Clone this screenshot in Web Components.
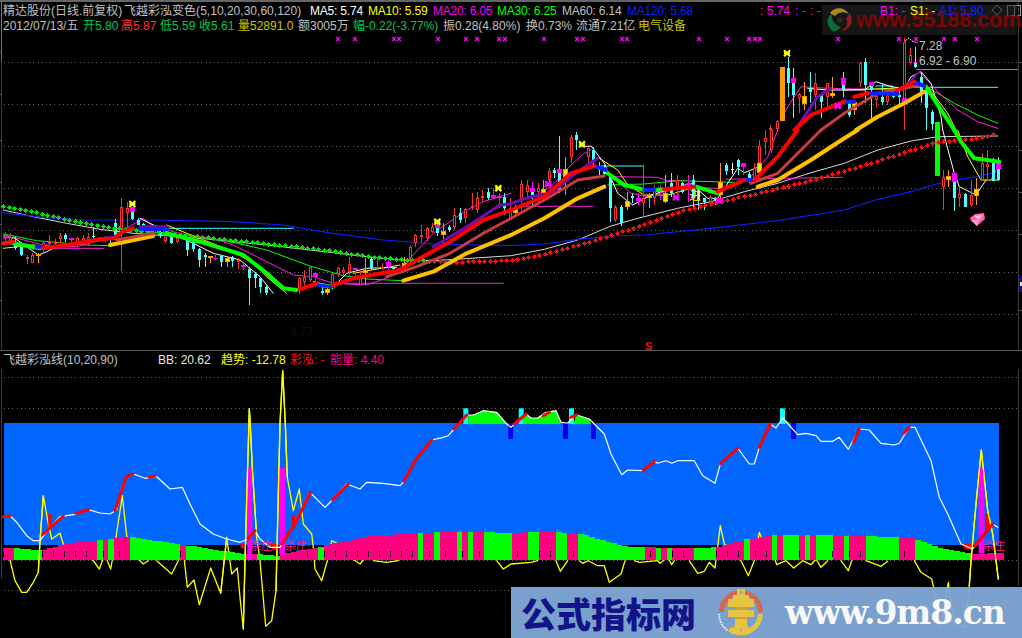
<!DOCTYPE html>
<html lang="zh"><head><meta charset="utf-8"><title>精达股份</title>
<style>
html,body{margin:0;padding:0;background:#000}
</style></head>
<body>
<stock-terminal>
  <main-chart>
    <quote-row slot="rows">
      <q-f w="121" c="#c0c0c0">精达股份(日线.前复权)</q-f>
      <q-f w="186" c="#c0c0c0" ls=".02">飞越彩泓变色(5,10,20,30,60,120)</q-f>
      <q-f w="58" c="#fff" ls="-.2">MA5: 5.74</q-f>
      <q-f w="65" c="#ff0" ls="-.2">MA10: 5.59</q-f>
      <q-f w="64" c="#f0f" ls="-.2">MA20: 6.05</q-f>
      <q-f w="65" c="#0f0" ls="-.2">MA30: 6.25</q-f>
      <q-f w="65" c="#c0c0c0" ls="-.2">MA60: 6.14</q-f>
      <q-f w="133" c="#0a20ff" ls="-.2">MA120: 5.68</q-f>
      <q-f w="35" c="#f0f">: 5.74</q-f>
      <q-f w="15" c="#f0f">: -</q-f>
      <q-f w="70" c="#f0f">: -</q-f>
      <q-f w="30" c="#f0f">B1: -</q-f>
      <q-f w="29" c="#ff0">S1: -</q-f>
      <q-f w="60" c="#0a20ff">A1: 5.80</q-f>
    </quote-row>
    <quote-row slot="rows">
      <q-f w="80" c="#c0c0c0">2012/07/13/五</q-f>
      <q-f w="38" c="#00c850">开5.80</q-f>
      <q-f w="39" c="#ff3232">高5.87</q-f>
      <q-f w="39" c="#00c850">低5.59</q-f>
      <q-f w="39" c="#00c850">收5.61</q-f>
      <q-f w="60" c="#c8c800">量52891.0</q-f>
      <q-f w="55" c="#c0c0c0">额3005万</q-f>
      <q-f w="90" c="#00c850">幅-0.22(-3.77%)</q-f>
      <q-f w="83" c="#c0c0c0">振0.28(4.80%)</q-f>
      <q-f w="50" c="#c0c0c0">换0.73%</q-f>
      <q-f w="62" c="#c0c0c0">流通7.21亿</q-f>
      <q-f w="60" c="#c8c800">电气设备</q-f>
    </quote-row>
  </main-chart>
  <indicator-chart>
    <quote-row slot="rows">
      <q-f w="155" c="#c0c0c0">飞越彩泓线(10,20,90)</q-f>
      <q-f w="63" c="#e8e8e8">BB: 20.62</q-f>
      <q-f w="69" c="#ff0">趋势: -12.78</q-f>
      <q-f w="40" c="#ff1010">彩泓: -</q-f>
      <q-f w="70" c="#ff0080">能量: 4.40</q-f>
    </quote-row>
  </indicator-chart>
  <brand-55188></brand-55188>
  <brand-9m8></brand-9m8>
</stock-terminal>
<script>
const A=(x,y)=>[x/3,130+y/3],B=(x,y)=>[511+x/3,130+y/3],C=(x,y)=>[511+x/3,y/3],D=(x,y)=>[x/3,345+y/3],E=(x,y)=>[511+x/3,345+y/3];
const f=n=>(+n).toFixed(1);
const FONT='"Liberation Sans","Noto Sans CJK SC",sans-serif';
function path(sp,s){const a=s.trim().split(/[\s,]+/).map(Number);const o=[];for(let i=0;i+1<a.length;i+=2)o.push(sp(a[i],a[i+1]));return o}
function merge(...g){return g.flatMap(([sp,s])=>path(sp,s))}
function line(pts,c,w,extra=''){return `<polyline fill="none" stroke="${c}" stroke-width="${w}" stroke-linejoin="round" stroke-linecap="round" ${extra} points="${pts.map(p=>f(p[0])+','+f(p[1])).join(' ')}"/>`}
function interp(pts,x){if(x<=pts[0][0])return pts[0][1];for(let i=1;i<pts.length;i++){if(x<=pts[i][0]){const a=pts[i-1],b=pts[i];return a[1]+(b[1]-a[1])*(x-a[0])/((b[0]-a[0])||1)}}return pts[pts.length-1][1]}
function dotted(y,x1=4,x2=1018){return `<line x1="${x1}" x2="${x2}" y1="${y+.5}" y2="${y+.5}" stroke="#666" stroke-width="1" stroke-dasharray="1 3.2" shape-rendering="crispEdges"/>`}

class QF extends HTMLElement{
  connectedCallback(){
    if(this.shadowRoot)return;
    const s=this.attachShadow({mode:'open'});
    const w=this.getAttribute('w'),c=this.getAttribute('c'),ls=this.getAttribute('ls')||'0';
    s.innerHTML=`<style>:host{display:block;flex:0 0 ${w}px;width:${w}px;color:${c};white-space:nowrap;letter-spacing:${ls}px}</style><slot></slot>`;
  }
}
class QuoteRow extends HTMLElement{
  connectedCallback(){
    if(this.shadowRoot)return;
    this.attachShadow({mode:'open'}).innerHTML=`<style>:host{display:flex;height:15px;line-height:15px;font:12px/15px ${FONT}}</style><slot></slot>`;
  }
}
class StockTerminal extends HTMLElement{
  connectedCallback(){
    if(this.shadowRoot)return;
    this.attachShadow({mode:'open'}).innerHTML=`<style>:host{display:block;position:relative;width:1022px;height:638px;background:#000;overflow:hidden}</style><slot></slot>`;
  }
}

/* ---------- main price pane ---------- */
const CANDLES=[
[A,[[14,305,315,325,335,'m'],[30,310,320,340,345,'r'],[46,322,335,355,360,'c'],[64,335,352,375,378,'c'],[80,375,380,385,402,'r'],[97,370,375,398,400,'r'],[115,370,372,377,398,'y'],[130,335,340,352,370,'r'],[148,315,335,342,355,'r'],[164,328,335,340,350,'r'],[180,310,318,328,340,'r'],[196,308,315,328,335,'c'],[214,325,325,330,345,'m'],[230,320,325,335,352,'r'],[248,315,325,335,345,'r'],[264,310,320,330,345,'r'],[280,290,318,322,330,'c'],[298,320,322,330,335,'r'],[314,318,322,330,335,'r'],[330,320,322,328,338,'c'],[346,268,278,315,330,'c'],[364,205,232,300,422,'r'],[380,215,235,250,290,'r'],[397,232,245,268,270,'c'],[397,232,232,245,245,'m'],[415,265,270,285,285,'c'],[430,280,282,295,300,'c'],[446,290,295,305,310,'r'],[462,295,300,315,320,'r'],[480,300,305,315,325,'c'],[496,320,322,332,340,'r'],[514,320,322,338,342,'c'],[530,315,325,335,340,'r'],[562,325,330,360,378,'c'],[580,330,332,358,365,'c'],[598,355,358,390,412,'c'],[614,370,375,380,410,'c'],[630,378,378,382,400,'y'],[646,370,383,388,390,'m'],[664,375,378,395,410,'c'],[680,378,385,395,410,'y'],[697,378,380,392,410,'c'],[713,385,390,392,418,'r'],[730,400,405,412,420,'m'],[748,410,418,445,525,'c'],[764,425,433,445,475,'c'],[781,440,445,470,490,'c'],[797,465,470,490,495,'c'],[897,440,445,480,492,'r'],[913,420,440,455,480,'r'],[930,410,412,450,455,'r'],[946,425,428,442,470,'m'],[965,470,482,490,495,'c'],[980,470,478,490,495,'y'],[997,430,432,470,480,'r'],[1013,410,415,432,440,'r'],[1030,410,420,428,435,'r'],[1046,380,402,425,440,'r'],[1064,415,415,420,440,'m'],[1080,420,440,465,465,'r'],[1096,385,420,430,465,'y'],[1114,380,388,415,420,'c'],[1130,385,410,415,420,'m'],[1147,400,410,415,420,'r'],[1163,390,395,410,420,'m'],[1180,410,412,418,420,'c'],[1213,380,400,412,420,'y'],[1230,345,352,385,395,'r'],[1246,312,316,340,350,'r'],[1264,285,315,322,340,'r'],[1280,290,295,325,332,'r'],[1296,280,290,305,310,'r'],[1312,270,295,310,318,'c'],[1312,285,285,295,295,'m'],[1330,280,302,316,340,'y'],[1346,285,290,300,305,'c'],[1363,235,255,290,300,'r'],[1380,235,250,270,280,'c'],[1396,235,238,265,280,'r'],[1415,190,228,235,240,'r'],[1430,185,203,240,250,'r'],[1447,180,198,203,215,'r'],[1463,175,185,205,210,'c'],[1480,175,195,205,205,'m'],[1497,190,198,203,235,'m'],[1513,190,200,235,255,'c'],[1530,205,235,270,270,'r']]],
[B,[[13,225,238,248,262,'y'],[31,150,163,210,240,'r'],[47,150,165,185,200,'r'],[64,155,175,185,225,'m'],[64,185,185,200,225,'c'],[80,160,175,185,200,'r'],[97,150,178,188,190,'y'],[113,115,122,150,170,'r'],[130,115,120,130,145,'c'],[145,18,128,185,190,'c'],[145,118,118,128,128,'m'],[163,80,118,140,195,'y'],[181,15,20,80,100,'r'],[196,5,15,30,60,'c'],[230,50,55,80,110,'r'],[247,50,60,90,115,'c'],[264,95,110,120,135,'c'],[280,105,115,133,140,'c'],[296,130,138,235,275,'c'],[313,225,232,270,275,'r'],[330,225,230,278,288,'c'],[347,185,212,230,240,'y'],[364,190,198,205,220,'c'],[380,190,205,212,225,'m'],[397,105,205,220,262,'r'],[413,190,195,205,235,'y'],[430,165,175,205,225,'r'],[447,165,172,182,210,'m'],[463,135,190,215,220,'y'],[480,130,158,190,200,'c'],[497,135,150,175,195,'r'],[514,155,160,185,190,'c'],[530,135,160,175,215,'m'],[547,135,150,205,230,'c'],[562,175,180,210,240,'c'],[580,205,205,215,240,'c'],[596,195,200,215,230,'r'],[613,200,205,210,225,'c'],[628,100,155,195,215,'y'],[645,100,105,122,135,'c'],[663,100,118,120,132,'w'],[680,88,90,110,135,'c'],[697,100,100,110,135,'m'],[713,125,132,150,160,'c'],[730,100,115,145,150,'r'],[745,30,48,100,125,'r'],[745,100,100,130,130,'y'],[763,0,25,35,75,'r'],[779,0,0,60,70,'r'],[1296,120,140,170,240,'r'],[1312,120,138,150,170,'y'],[1330,155,155,205,242,'c'],[1330,125,130,155,155,'m'],[1345,170,192,205,230,'r'],[1362,190,192,230,232,'c'],[1379,150,195,225,232,'r'],[1396,145,178,197,225,'y'],[1412,70,100,150,150,'r'],[1429,60,102,110,150,'r'],[1446,85,100,152,152,'c'],[1462,80,118,150,152,'c'],[1462,100,100,118,118,'m']]],
[C,[[777,375,385,390,390,'r'],[797,360,362,388,390,'r'],[830,170,205,250,290,'c'],[847,205,250,285,355,'c'],[847,235,235,250,250,'m'],[863,280,283,293,340,'r'],[880,245,288,312,330,'y'],[897,215,265,275,310,'c'],[913,220,250,285,330,'r'],[930,280,285,305,355,'c'],[947,250,250,290,320,'r'],[964,230,280,288,295,'y'],[997,215,235,270,290,'c'],[997,235,235,255,255,'m'],[1013,300,300,345,350,'c'],[1030,300,305,330,345,'y'],[1046,185,188,250,260,'r'],[1063,175,185,255,310,'c'],[1079,245,258,270,360,'c'],[1079,245,245,258,258,'m'],[1096,285,288,300,320,'r'],[1112,250,290,305,315,'c'],[1129,280,285,305,315,'r'],[1146,270,285,290,295,'c'],[1163,260,285,290,315,'c'],[1180,115,125,300,390,'r'],[1180,295,295,310,310,'m'],[1196,145,165,190,195,'r'],[1213,140,190,200,205,'c'],[1213,185,185,190,190,'m'],[1230,215,230,275,310,'c'],[1246,270,270,325,390,'c'],[1262,330,335,372,390,'c']]]
];
function candles(){
  let o='';
  const wickCol={r:'#ff3232',c:'#54ffff',m:'#ff00ff',y:'#ff9a00',w:'#fff'};
  for(const [sp,list] of CANDLES){
    for(const [x,h,t,b,l,k] of list){
      const [px,py1]=sp(x,h),py2=sp(x,l)[1],pt=sp(x,t)[1],pb=sp(x,b)[1];
      const X=Math.round(px);
      if(py2>py1)o+=`<rect x="${X}" y="${f(py1)}" width="1" height="${f(py2-py1)}" fill="${wickCol[k]}"/>`;
      if(k==='r')o+=`<rect x="${X-.5}" y="${f(pt+.5)}" width="2" height="${f(Math.max(1,pb-pt-1))}" fill="#000" stroke="#ff3232" stroke-width="1"/>`;
      else if(k==='y')o+=`<rect x="${X-1.5}" y="${f(pt+.5)}" width="4" height="${f(Math.max(1,pb-pt-1))}" fill="#ffe000" stroke="#ff9a00" stroke-width="1"/>`;
      else if(k==='m')o+=`<rect x="${X-2}" y="${f(pt)}" width="5" height="${f(Math.max(1,pb-pt))}" fill="#ff00ff"/>`;
      else o+=`<rect x="${X-1}" y="${f(pt)}" width="3" height="${f(Math.max(1,pb-pt))}" fill="${wickCol[k]}"/>`;
    }
  }
  return o;
}
function star(x,y,c,r=3){return `<g stroke="${c}" stroke-width="2.2"><line x1="${x-r}" y1="${y-r}" x2="${x+r}" y2="${y+r}"/><line x1="${x+r}" y1="${y-r}" x2="${x-r}" y2="${y+r}"/><line x1="${x-r}" y1="${y}" x2="${x+r}" y2="${y}"/></g>`}
function mainSvg(){
  let s='';
  for(const y of [62,104,146,188,230,272,314])s+=dotted(y);
  for(const y of [52,94,140,182,224,266,300])s+=`<rect x="0" y="${y}" width="2" height="1" fill="#555"/><rect x="1019" y="${y+10}" width="3" height="1" fill="#555"/>`;
  s+=`<polygon points="997,5 1002,10 997,15 992,10" fill="none" stroke="#999"/><rect x="1007.5" y="5.5" width="13" height="10" fill="none" stroke="#999"/><line x1="1014.5" y1="5" x2="1014.5" y2="16" stroke="#999"/>`;
  const xs=[1014,1065,1182,1197,1314,1398,1431,1497,1514].map(v=>v/3).concat([98,197,215,332,348,565,648,714,731,747,980,1163,1216,1300,1332,1398].map(v=>511+v/3));
  for(const x of xs){const X=Math.round(x);s+=`<g stroke="#ff00ff" stroke-width="1.3"><line x1="${X-1.8}" y1="37" x2="${X+1.8}" y2="41"/><line x1="${X+1.8}" y1="37" x2="${X-1.8}" y2="41"/></g>`}
  const gray=merge([A,'10 240 100 260 200 280 300 298 400 310 600 325 800 345 1000 368 1100 380 1200 390 1300 392 1533 377'],[B,'100 358 200 330 300 288 380 265 500 235 600 215 700 185 800 160 900 128 1000 100 1100 60 1200 33 1280 20 1460 18']);
  s+=line(gray,'#d8d8d8',1);
  const blue=merge([A,'10 248 130 262 250 270 450 270 700 275 850 285 1000 310 1150 330 1300 342 1533 347'],[B,'100 342 200 328 300 318 400 315 600 295 800 272 1000 240 1100 208 1200 185 1300 155 1400 140 1460 125']);
  s+=line(blue,'#0a20ff',1.2);
  s+=line(path(A,'450 295 880 295'),'#40ffff',1);
  s+=line(path(B,'250 108 395 108'),'#40ffff',1);
  s+=line(path(C,'1095 258 1145 258 1145 270'),'#40ffff',1);
  s+=line(path(C,'1240 262 1460 262'),'#40ffff',1);
  s+=line(path(A,'130 355 312 355'),'#ff20e0',1);
  s+=line(path(A,'1000 460 1510 460'),'#ff20e0',1);
  s+=line(path(B,'40 229 245 229'),'#ff20e0',1);
  s+=line(path(B,'300 140 440 142 470 152 520 152'),'#ff20e0',1);
  s+=line(path(B,'645 148 995 142'),'#ff20e0',1);
  s+=line(merge([A,'10 312 50 320 110 332 200 340 260 345 330 347']),'#00ff00',1);
  s+=line(merge([A,'690 335 800 360 930 408 1030 437 1100 447 1210 452']),'#00ff00',1);
  s+=line(merge([B,'290 165 400 162 500 152 640 156 690 160']),'#00ff00',1);
  s+=line(merge([C,'1250 262 1330 310 1400 345 1460 370']),'#00ff00',1);
  const mag=merge([A,'10 325 40 322 130 345 230 350 340 320 370 300 430 265 460 290 560 315 640 325 700 345 770 380 830 410 880 435 940 440 1000 460 1100 465 1170 440 1230 385 1300 310 1400 240 1450 215 1533 190']);
  s+=line(mag,'#ff20e0',1);
  s+=line(merge([B,'60 205 120 170 180 105 220 70 240 60']),'#ff20e0',1);
  s+=line(merge([B,'300 135 360 190 410 200 480 180 540 170 610 175 650 175 720 140 770 80 800 0']),'#ff20e0',1);
  s+=line(merge([C,'810 360 830 320 870 260 950 265 1180 270 1225 215 1280 275 1340 330 1400 365 1460 385']),'#ff20e0',1);
  s+=line(merge([B,'1440 150 1460 110']),'#ff20e0',1);
  s+=line(merge([C,'1000 270 1140 265 1250 260 1310 340 1335 390']),'#ffff00',1);
  s+=line(merge([B,'1340 0 1370 80 1410 150 1462 150']),'#ffff00',1);
  s+=line(merge([A,'10 355 100 345 180 352']),'#ffff00',1);
  s+=line(merge([A,'500 285 560 310 700 365 770 405 800 440 860 490']),'#ffff00',1);
  s+=line(merge([A,'1060 430 1200 405']),'#ffff00',1);
  s+=line(merge([B,'265 85 320 120 350 165 400 195 470 195 490 190 555 170']),'#ffff00',1);
  s+=line(merge([A,'10 318 45 325 80 350 115 375 140 365 180 345']),'#fff',1);
  s+=line(merge([A,'420 265 500 305 580 340 640 370 720 390 780 440 820 490']),'#fff',1);
  s+=line(merge([A,'940 455 1000 470 1040 430 1100 415 1190 412']),'#fff',1);
  s+=line(merge([B,'213 50 240 48 280 100 320 190 365 225 420 195 470 180 540 160 590 205 620 205 680 115 700 128 745 110']),'#fff',1);
  s+=line(merge([C,'890 265 950 270 1060 270 1095 245 1140 260 1180 265 1200 230 1230 215 1260 250 1290 350 1295 390']),'#fff',1);
  s+=line(merge([B,'1295 0 1330 130 1345 170 1395 195 1425 150']),'#fff',1);
  s+=`<g shape-rendering="crispEdges">${candles()}`;
  s+=`<rect x="${Math.round(511+807/3)}" y="67" width="5" height="54" fill="#ff9a00"/>`;
  s+=`<rect x="${Math.round(511+1273/3)}" y="122" width="5" height="54" fill="#00ff00"/>`;
  s+=`</g>`;
  const dots=merge([A,'10 228 100 245 200 268 300 288 400 300 500 310 600 320 700 330 800 340 900 350 1000 362 1100 378 1200 388 1280 392 1350 396 1533 390'],[B,'100 372 200 345 300 316 400 282 500 245 600 220 700 198 800 175 900 150 1000 122 1100 92 1200 60 1280 35 1400 25 1460 8']);
  let dg='';
  for(let x=3;x<=998;x+=5.53){const y=interp(dots,x);dg+=`<circle cx="${Math.round(x)+.5}" cy="${Math.round(y)+.5}" r="2.1" fill="${x<430?'#00e000':'#f01010'}"/>`}
  s+=`<g shape-rendering="crispEdges">${dg}</g>`;
  const rb=(sp,str,c,w)=>line(path(sp,str),c,w);
  s+=rb(A,'330 345 460 318','#ffc000',4);
  s+=rb(A,'1210 452 1300 425 1400 370 1533 315','#ffc000',4);
  s+=rb(B,'0 315 100 265 200 205 280 170','#ffc000',4);
  s+=rb(B,'740 170 800 150 900 90 1000 25 1040 0','#ffc000',4);
  s+=rb(C,'1035 390 1100 350 1180 310 1240 275','#ffc000',4);
  s+=rb(A,'350 330 460 310','#c83c3c',3);
  s+=rb(A,'1160 440 1250 410 1350 370 1450 310 1533 265','#c83c3c',3);
  s+=rb(B,'0 265 100 210 200 150 280 138','#c83c3c',3);
  s+=rb(B,'720 160 800 130 930 0','#c83c3c',3);
  s+=rb(C,'930 390 1000 340 1100 280 1230 255','#c83c3c',3);
  s+=rb(A,'1300 350 1400 290 1500 225 1533 222','#6a10b0',3);
  s+=rb(B,'0 220 60 200 120 190 200 125 260 85','#6a10b0',3);
  s+=rb(C,'860 380 920 290 960 265','#6a10b0',3);
  s+=rb(C,'1170 270 1225 215','#6a10b0',2);
  s+=rb(A,'420 290 500 290','#6a10b0',3);
  s+=rb(A,'40 340 120 355','#00ff00',4);
  s+=rb(A,'500 310 600 335 730 375 800 430 850 475 890 480','#00ff00',4);
  s+=rb(A,'960 465 1000 470','#00ff00',4);
  s+=rb(B,'290 130 340 165 400 180','#00ff00',4);
  s+=rb(B,'430 180 450 180','#00ff00',4);
  s+=rb(B,'555 170 620 190','#00ff00',4);
  s+=rb(C,'1245 260 1290 330 1330 390','#00ff00',4);
  s+=rb(B,'1330 0 1350 35 1390 85 1465 95','#00ff00',4);
  s+=rb(A,'110 350 130 350','#0a20ff',4);
  s+=rb(A,'320 325 340 325','#0a20ff',4);
  s+=rb(A,'420 297 500 297','#0a20ff',4);
  s+=rb(A,'950 465 1000 470','#0a20ff',3);
  s+=rb(B,'250 108 285 120','#0a20ff',4);
  s+=rb(B,'400 180 430 180','#0a20ff',4);
  s+=rb(B,'700 150 730 150','#0a20ff',4);
  s+=rb(C,'1000 305 1030 305','#0a20ff',4);
  s+=rb(C,'1070 280 1160 282','#0a20ff',4);
  s+=rb(C,'1215 248 1240 258','#0a20ff',4);
  s+=rb(A,'10 340 40 335','#ff1010',4);
  s+=rb(A,'130 355 200 345 300 328 340 325 370 305 400 295','#ff0000',4);
  s+=rb(A,'900 478 950 460','#ff0000',4);
  s+=rb(A,'1000 465 1060 445 1200 420 1260 385 1350 335 1450 270 1533 240','#ff0000',4);
  s+=rb(B,'0 240 100 200 180 130 250 108','#ff0000',4);
  s+=rb(B,'460 178 550 170','#ff0000',4);
  s+=rb(B,'620 185 700 150','#ff0000',4);
  s+=rb(B,'730 150 800 80 860 0','#ff0000',4);
  s+=rb(C,'850 390 900 345 1000 305','#ff0000',4);
  s+=rb(C,'1030 290 1070 280','#ff0000',4);
  s+=rb(C,'1160 270 1210 245','#ff0000',4);
  for(const [x,y] of [A(397,222),A(1312,275),A(1495,175),B(213,43),C(828,160)])s+=star(f(x)*1,f(y)*1,'#ffff00');
  for(const [x,y] of [B(112,162),B(495,202),B(625,212),C(980,318)])s+=star(f(x)*1,f(y)*1,'#ff00ff');
  s+=`<polyline points="905,41 909,38 912,41 918,43" fill="none" stroke="#ddd" stroke-width="1" stroke-dasharray="2 1"/>`;
  s+=`<rect x="916" y="69" width="102" height="1" fill="#888"/>`;
  s+=`<text x="919" y="50" fill="#c0c0c0" font-family="Liberation Sans" font-size="12">7.28</text>`;
  s+=`<text x="919" y="65" fill="#c0c0c0" font-family="Liberation Sans" font-size="12">6.92 - 6.90</text>`;
  s+=`<g><polygon points="970,218 975,214 984,213 985,219 977,226 971,221" fill="#ff5fa8"/><polygon points="974,216 983,215 979,220" fill="#ffc0dc"/><polygon points="977,226 972,220 979,220" fill="#ffa0c8"/></g>`;
  s+=`<text x="645" y="350" fill="#f01010" font-family="Liberation Sans" font-size="11" font-weight="700">S</text>`;
  s+=`<text x="689" y="200" fill="#ffee00" font-family="Noto Sans CJK SC" font-size="12">进</text>`;
  s+=`<text x="290" y="336" fill="#0a120c" font-family="Liberation Sans" font-size="12">3.77</text>`;
  s+=`<rect x="1019" y="276" width="3" height="16" fill="#10107a"/><rect x="1020" y="282" width="2" height="4" fill="#ddd"/>`;
  return s;
}
class MainChart extends HTMLElement{
  connectedCallback(){
    if(this.shadowRoot)return;
    this.attachShadow({mode:'open'}).innerHTML=`<style>
      :host{display:flex;flex-direction:column;height:351px;box-sizing:border-box;border-top:2px solid #666;overflow:hidden}
      .head{padding:2px 0 0 3px;height:31px;box-sizing:border-box;flex:none;position:relative;z-index:1}
      svg{display:block;flex:none;width:1022px;height:349px;margin-top:-31px}
    </style>
    <div class="head"><slot name="rows"></slot></div>
    <svg viewBox="0 2 1022 349" xmlns="http://www.w3.org/2000/svg" id="s"></svg>`;
    this.shadowRoot.getElementById('s').innerHTML=`<rect x="1" y="2" width="1" height="60" fill="#777"/><rect x="1" y="62" width="1" height="289" fill="#3a3a3a"/><rect x="1018" y="2" width="1" height="349" fill="#3a3a3a"/>`+mainSvg();
  }
}

/* ---------- indicator pane ---------- */
function inRange(x,r){return r.some(([a,b])=>x>=a&&x<b)}
function indicatorSvg(){
  let s='';
  for(const y of [378,409,561,591])s+=dotted(y);
  s+=`<rect x="4" y="424" width="995" height="122" fill="#0066ff"/>`;
  const hump=(sp,str)=>`<polygon fill="#00ff00" points="${path(sp,str).map(p=>f(p[0])+','+f(p[1])).join(' ')}"/>`;
  s+=hump(D,'1405 240 1405 213 1420 213 1450 200 1490 205 1520 240');
  s+=hump(E,'38 240 38 210 60 222 80 222 105 205 135 200 150 240');
  s+=hump(E,'188 240 195 212 235 225 240 240');
  s+=hump(E,'822 240 822 228 837 238');
  const rectZ=(sp,x1,y1,x2,y2,c)=>{const a=sp(x1,y1),b=sp(x2,y2);return `<rect x="${f(a[0])}" y="${f(a[1])}" width="${f(b[0]-a[0])}" height="${f(b[1]-a[1])}" fill="${c}"/>`};
  for(const [sp,x] of [[D,1390],[E,23],[E,174],[E,807]])s+=rectZ(sp,x,193,x+15,240,'#00ffff');
  for(const [sp,x,w] of [[D,1525,8],[E,0,6],[E,156,15],[E,240,15],[E,840,15]])s+=rectZ(sp,x,237,x+w,285,'#0000ee');

  /* yellow oscillator lies under the bars; steep spikes are repeated over them */
  const yel=merge([D,'30 648 45 710 65 745 80 745 100 715 115 685 120 590 130 455 145 540 155 585 180 568 190 600 280 650 298 675 308 648 322 650 332 675 345 600 367 455 380 575 400 630 430 660 445 650 470 650 515 690 535 650 552 640 562 730 582 708 598 782 632 672 662 748 680 580 695 690 712 672 720 760 730 855 735 650 748 195 750 225 757 372 770 580 780 650 797 847 815 830 828 740 840 240 848 80 856 240 862 400 880 500 898 435 910 540 935 570 940 610 945 675 965 710 982 650 995 590 1015 600 1050 640 1080 660 1090 648 1105 648 1120 650 1160 655 1195 650 1415 650 1455 650 1490 650 1510 675 1533 660'],[E,'60 655 80 650 135 650 148 682 170 650 205 650 215 658 232 650 260 665 280 665 295 715 330 690 342 650 370 650 385 655 440 650 447 658 470 640 482 662 490 650 535 650 560 688 580 682 595 655 612 672 628 545 640 600 680 630 690 650 712 695 730 650 745 565 755 590 790 640 797 662 825 650 848 672 875 650 900 662 915 645 930 670 950 650 990 650 1012 680 1022 650 1065 650 1110 667 1130 652 1160 650 1210 650 1230 685 1262 705 1270 740 1290 850 1312 715 1330 840 1362 850 1375 725 1380 650 1395 480 1411 318 1430 500 1445 570 1455 650 1462 705']);
  let run=[];const flush=()=>{if(run.length>1)s+=line(run,'#ffff00',1.3);run=[]};
  for(let i=0;i<yel.length;i++){
    if(i>0&&yel[i][1]>=556&&yel[i][1]<=563&&yel[i-1][1]>=556&&yel[i-1][1]<=563){flush()}
    run.push(yel[i]);
  }
  flush();

  const contour=merge([D,'10 610 100 617 130 618 200 598 300 588 380 580 400 580 500 595 600 610 700 625 730 630 760 628 830 635 850 630 900 620 950 610 1000 600 1100 578 1250 567 1400 562 1533 567'],[E,'100 563 200 567 300 595 350 608 500 612 620 610 700 587 800 572 1000 575 1200 580 1300 615 1380 630 1470 627']);
  const greens=[[38,55],[55,122],[290,306],[323,340],[388,540],[555,735],[773,835],[955,972],[1255,1272],[1305,1320],[1372,1390],[1406,1422],[1455,1533]].map(([a,b])=>[a/3,b/3]).concat(
    [[0,5],[55,88],[137,171],[205,405],[437,453],[472,490],[555,620],[705,720],[787,805],[822,870],[887,903],[920,970],[990,1020],[1070,1170],[1205,1385],[1455,1470]].map(([a,b])=>[511+a/3,511+b/3]));
  let bars='',sep='',n=0;
  for(let x=3;x<1001;x+=5.53){
    const mid=x+2.7,top=interp(contour,mid),g=inRange(mid,greens);
    bars+=`<rect x="${f(x)}" y="${f(top)}" width="5.6" height="${f(561-top)}" fill="${g?'#00ff00':'#ff0080'}"/>`;
    if(!g&&top<551&&(n++%2===0))sep+=`<rect x="${Math.round(x)}" y="552" width="1" height="6" fill="#000"/>`;
  }
  s+=`<g shape-rendering="crispEdges">${bars}${sep}</g>`;
  s+=rectZ(D,742,372,757,648,'#ff00ff');
  s+=rectZ(D,838,372,856,632,'#ff00ff');
  s+=rectZ(E,1403,372,1420,628,'#ff00ff');
  s+=rectZ(D,145,510,155,550,'#ff0000');
  s+=rectZ(D,875,515,885,550,'#ff0000');
  s+=rectZ(E,1422,510,1437,560,'#ff0000');
  s+=`<polygon points="${[[808,600],[835,600],[835,622],[815,615]].map(p=>D(...p).map(f).join(',')).join(' ')}" fill="#ff0000"/>`;
  s+=rectZ(D,722,600,735,613,'#ff0000');
  s+=`<polygon points="${[[1355,600],[1385,600],[1380,618],[1362,615]].map(p=>E(...p).map(f).join(',')).join(' ')}" fill="#ff0000"/>`;
  for(const [sp,str] of [[D,'115 685 120 590 130 455'],[D,'662 748 680 580'],[D,'730 855 735 650 748 195 750 225 757 372 770 580'],[D,'828 740 840 240 848 80 856 240 862 400'],[E,'1375 725 1380 650 1395 480 1411 318 1430 500 1445 570 1455 650 1462 705']])
    s+=line(path(sp,str),'#ffff00',1.3);
  const wht=merge([D,'10 518 30 515 50 535 80 575 100 590 120 590 150 550 180 518 220 512 265 497 300 507 330 510 350 498 365 430 380 400 400 390 435 403 470 398 510 435 547 430 570 480 600 540 640 570 680 585 720 595 745 585 765 560 780 585 810 610 840 610 880 545 930 445 975 490 1000 465 1040 420 1080 435 1100 415 1150 418 1200 425 1215 410 1245 350 1295 288 1330 280 1345 275 1400 213 1420 213 1450 200 1490 205 1520 240 1533 250'],[E,'10 240 45 210 60 222 80 222 105 205 135 200 150 235 170 237 195 212 235 225 280 270 300 330 332 392 350 378 395 380 430 352 440 358 465 350 482 358 500 350 550 350 575 395 612 418 628 360 680 312 715 360 730 360 745 310 778 240 795 252 815 222 860 272 885 268 915 275 930 292 965 292 985 280 1012 316 1045 255 1075 258 1110 298 1150 303 1165 298 1195 250 1212 250 1260 350 1285 460 1310 510 1350 600 1385 615 1445 540 1460 550']);
  s+=line(wht,'#fff',1.2);
  const segs=[[D,'10 518 30 515'],[D,'130 570 190 516'],[D,'228 508 265 497'],[D,'345 500 378 400 398 390'],[D,'448 400 465 396'],[D,'745 585 765 560'],[D,'845 600 880 548 932 445'],[D,'998 468 1045 420'],[D,'1212 412 1245 350 1295 288'],[D,'1362 255 1400 213'],[E,'10 240 45 210'],[E,'97 215 115 205'],[E,'180 220 197 212'],[E,'397 380 430 352'],[E,'628 360 680 312'],[E,'745 310 778 240'],[E,'1028 295 1045 255'],[E,'1178 268 1195 250'],[E,'1392 605 1445 540']];
  for(const [sp,str] of segs)s+=line(path(sp,str),'#ff0000',3);
  const lab=(x,t,sz=11)=>`<text x="${x}" y="551" fill="#ff2090" font-family="Noto Sans CJK SC" font-size="${sz}">${t}</text>`;
  s+=lab(250,'杀庄')+lab(285,'杀庄')+lab(983,'杀庄');
  return s;
}
class IndicatorChart extends HTMLElement{
  connectedCallback(){
    if(this.shadowRoot)return;
    this.attachShadow({mode:'open'}).innerHTML=`<style>
      :host{display:flex;flex-direction:column;height:287px;overflow:hidden;border-top:1px solid #555;margin-top:-1px}
      .head{padding:2px 0 0 3px;height:18px;box-sizing:border-box;flex:none}
      svg{display:block;flex:none;width:1022px;height:269px}
    </style>
    <div class="head"><slot name="rows"></slot></div>
    <svg viewBox="0 370 1022 269" xmlns="http://www.w3.org/2000/svg" id="s"></svg>`;
    this.shadowRoot.getElementById('s').innerHTML=`<rect x="1" y="350" width="1" height="230" fill="#3a3a3a"/><rect x="1018" y="350" width="1" height="237" fill="#3a3a3a"/>`+indicatorSvg();
  }
}

/* ---------- watermarks ---------- */
class Brand55188 extends HTMLElement{
  connectedCallback(){
    if(this.shadowRoot)return;
    this.attachShadow({mode:'open'}).innerHTML=`<style>
      :host{position:absolute;left:822px;top:5px;width:195px;height:30px;background:rgba(40,40,40,.55);display:flex;align-items:center}
      svg{flex:none;margin-left:2px;width:30px;height:30px}
      b{margin-left:2px;font:700 21.5px/30px "Liberation Sans",sans-serif;color:#7a0606;letter-spacing:0;white-space:nowrap}
    </style>
    <svg viewBox="0 0 30 30">
      <path d="M6 8 C10 2 20 1 25 9 C20 6 14 7 11 11 C9 10 7 9 6 8Z" fill="#a88a20"/>
      <path d="M8 26 C2 20 2 12 8 9 C7 14 10 20 17 22 C15 25 11 27 8 26Z" fill="#0e6a38"/>
      <path d="M26 8 C30 14 28 25 17 26 C22 23 25 19 22 14 C23 12 25 10 26 8Z" fill="#8a1c1c"/>
      <circle cx="16" cy="15" r="2.5" fill="#3a2a10"/>
    </svg>
    <b>www.55188.com</b>`;
  }
}
class Brand9m8 extends HTMLElement{
  connectedCallback(){
    if(this.shadowRoot)return;
    this.attachShadow({mode:'open'}).innerHTML=`<style>
      :host{position:absolute;left:511px;top:587px;width:511px;height:51px;background:rgba(127,168,214,.96);display:flex;align-items:center}
      .cn{flex:none;margin-left:10px;width:180px;font:900 35px/51px "Noto Sans CJK SC",sans-serif;color:#14148a;white-space:nowrap}
      svg{flex:none;width:50px;height:50px;margin-left:15px}
      .url{flex:none;margin-left:19px;font:700 33px/51px "DejaVu Serif",serif;color:#f8f8f8;white-space:nowrap;letter-spacing:-1px}
    </style>
    <span class="cn">公式指标网</span>
    <svg viewBox="0 0 50 50">
      <path d="M3 24 A22 22 0 0 1 47 24 L42 24 A17 17 0 0 0 8 24 Z" fill="#d8644c"/>
      <path d="M47 26 A22 22 0 0 1 12 43 L15 39 A17 17 0 0 0 42 26 Z" fill="#e8c440"/>
      <path d="M3 26 A22 22 0 0 0 12 43" fill="none" stroke="#e8eef6" stroke-width="2" stroke-dasharray="1.5 1"/>
      <path d="M21 1 H29 V7 H33 V11 H38 V19 H31 V22 H38 V29 H31 V36 L35 46 H28 L25 40 L22 46 H15 L19 36 V29 H12 V22 H19 V19 H12 V11 H17 V7 H21Z" fill="#e8c440"/>
      <rect x="23.5" y="3" width="3" height="3" fill="#7fa8d6"/>
      <rect x="19" y="19" width="12" height="3" fill="#c8a430"/>
      <rect x="19" y="29" width="12" height="2" fill="#c8a430"/>
    </svg>
    <span class="url">www.9m8.cn</span>`;
  }
}
customElements.define('q-f',QF);
customElements.define('quote-row',QuoteRow);
customElements.define('main-chart',MainChart);
customElements.define('indicator-chart',IndicatorChart);
customElements.define('brand-55188',Brand55188);
customElements.define('brand-9m8',Brand9m8);
customElements.define('stock-terminal',StockTerminal);
</script>
</body></html>
